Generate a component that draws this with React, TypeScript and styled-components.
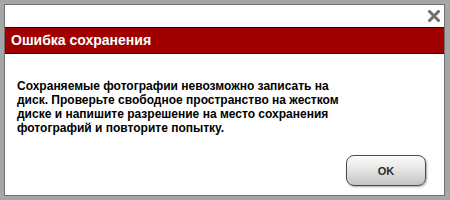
import styled, { createGlobalStyle } from 'styled-components';

const GlobalStyle = createGlobalStyle`
  html, body {
    margin: 0;
    padding: 0;
    background: #a6a6a6;
  }
  body {
    font-family: "Liberation Sans", Arial, sans-serif;
  }
`;

const Frame = styled.div`
  box-sizing: border-box;
  height: 200px;
  padding: 4px 5px 4px 4px;
  width: 450px;
`;

const Dialog = styled.div`
  background: #ffffff;
  border: 1px solid #6f6f6f;
  box-sizing: border-box;
  display: flex;
  flex-direction: column;
  height: 100%;
`;

const TopBar = styled.div`
  display: flex;
  height: 22px;
  justify-content: flex-end;
  padding: 0 2px 0 0;
`;

const CloseButton = styled.button`
  align-items: center;
  background: none;
  border: 0;
  cursor: pointer;
  display: flex;
  height: 22px;
  justify-content: center;
  padding: 0;
  width: 16px;
`;

const TitleBar = styled.div`
  background: #a00000;
  border-bottom: 1px solid #3a0000;
  border-top: 1px solid #2a0000;
  color: #ffffff;
  font-size: 14px;
  font-weight: bold;
  height: 25px;
  line-height: 25px;
  padding: 0 6px;
`;

const Body = styled.div`
  color: #000000;
  flex: 1;
  font-size: 12px;
  font-weight: bold;
  line-height: 14px;
  padding: 25px 20px 0 12px;
`;

const Footer = styled.div`
  display: flex;
  justify-content: flex-end;
  padding: 0 18px 9px 0;
`;

const OkButton = styled.button`
  background: linear-gradient(#fafafa 0%, #e6e6e6 45%, #c4c4c4 100%);
  border: 1px solid #4a4a4a;
  border-radius: 8px;
  box-shadow:
    inset 0 1px 0 #ffffff,
    1px 1px 2px rgb(0 0 0 / 35%);
  color: #2a2a2a;
  font-family: "Liberation Sans", Arial, sans-serif;
  font-size: 11px;
  font-weight: bold;
  height: 31px;
  width: 80px;
`;

export default function App() {
  return (
    <>
      <GlobalStyle />
      <Frame>
        <Dialog>
          <TopBar>
            <CloseButton aria-label="Закрыть">
              <svg width="12" height="12" viewBox="0 0 12 12">
                <path
                  d="M1.5 1.5 L10.5 10.5 M10.5 1.5 L1.5 10.5"
                  stroke="#6e6e6e"
                  strokeWidth="3"
                  strokeLinecap="square"
                />
              </svg>
            </CloseButton>
          </TopBar>
          <TitleBar>Ошибка сохранения</TitleBar>
          <Body>
            Сохраняемые фотографии невозможно записать на
            <br />
            диск. Проверьте свободное пространство на жестком
            <br />
            диске и напишите разрешение на место сохранения
            <br />
            фотографий и повторите попытку.
          </Body>
          <Footer>
            <OkButton>OK</OkButton>
          </Footer>
        </Dialog>
      </Frame>
    </>
  );
}
